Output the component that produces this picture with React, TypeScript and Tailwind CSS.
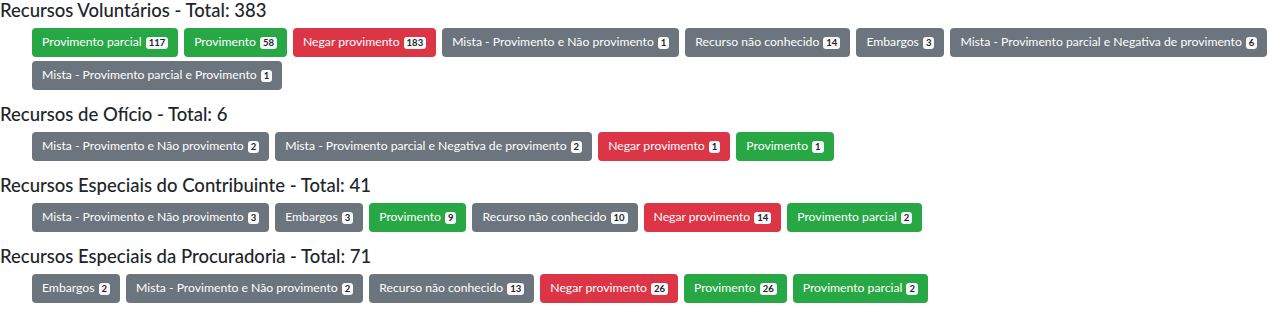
type Tone = "green" | "red" | "gray";

interface Item {
  label: string;
  count: number;
  tone: Tone;
}

interface Section {
  title: string;
  items: Item[];
}

const sections: Section[] = [
  {
    title: "Recursos Voluntários - Total: 383",
    items: [
      { label: "Provimento parcial", count: 117, tone: "green" },
      { label: "Provimento", count: 58, tone: "green" },
      { label: "Negar provimento", count: 183, tone: "red" },
      { label: "Mista - Provimento e Não provimento", count: 1, tone: "gray" },
      { label: "Recurso não conhecido", count: 14, tone: "gray" },
      { label: "Embargos", count: 3, tone: "gray" },
      { label: "Mista - Provimento parcial e Negativa de provimento", count: 6, tone: "gray" },
      { label: "Mista - Provimento parcial e Provimento", count: 1, tone: "gray" },
    ],
  },
  {
    title: "Recursos de Ofício - Total: 6",
    items: [
      { label: "Mista - Provimento e Não provimento", count: 2, tone: "gray" },
      { label: "Mista - Provimento parcial e Negativa de provimento", count: 2, tone: "gray" },
      { label: "Negar provimento", count: 1, tone: "red" },
      { label: "Provimento", count: 1, tone: "green" },
    ],
  },
  {
    title: "Recursos Especiais do Contribuinte - Total: 41",
    items: [
      { label: "Mista - Provimento e Não provimento", count: 3, tone: "gray" },
      { label: "Embargos", count: 3, tone: "gray" },
      { label: "Provimento", count: 9, tone: "green" },
      { label: "Recurso não conhecido", count: 10, tone: "gray" },
      { label: "Negar provimento", count: 14, tone: "red" },
      { label: "Provimento parcial", count: 2, tone: "green" },
    ],
  },
  {
    title: "Recursos Especiais da Procuradoria - Total: 71",
    items: [
      { label: "Embargos", count: 2, tone: "gray" },
      { label: "Mista - Provimento e Não provimento", count: 2, tone: "gray" },
      { label: "Recurso não conhecido", count: 13, tone: "gray" },
      { label: "Negar provimento", count: 26, tone: "red" },
      { label: "Provimento", count: 26, tone: "green" },
      { label: "Provimento parcial", count: 2, tone: "green" },
    ],
  },
];

const toneClass: Record<Tone, string> = {
  green: "bg-[#28a745]",
  red: "bg-[#dc3545]",
  gray: "bg-[#6c757d]",
};

function ResultButton({ item }: { item: Item }) {
  return (
    <button
      className={`${toneClass[item.tone]} h-[29px] rounded-[4px] px-[10px] text-white text-[12.2px] flex items-center gap-[4px]`}
    >
      <span>{item.label}</span>
      <span className="bg-[#f8f9fa] text-[#212529] font-bold text-[9.5px] leading-[12px] px-[3px] rounded-[3px]">
        {item.count}
      </span>
    </button>
  );
}

export default function App() {
  return (
    <div
      className="bg-white text-[#212529] w-[1269px] h-[309px] overflow-hidden"
      style={{ fontFamily: 'Lato, "Noto Sans", sans-serif' }}
    >
      {sections.map((s) => (
        <section key={s.title} className="mb-[14px]">
          <h5 className="text-[18.5px] font-medium leading-[20px] mb-2">{s.title}</h5>
          <div className="flex flex-wrap gap-x-[6px] gap-y-[4px] pl-8">
            {s.items.map((it) => (
              <ResultButton key={it.label} item={it} />
            ))}
          </div>
        </section>
      ))}
    </div>
  );
}
